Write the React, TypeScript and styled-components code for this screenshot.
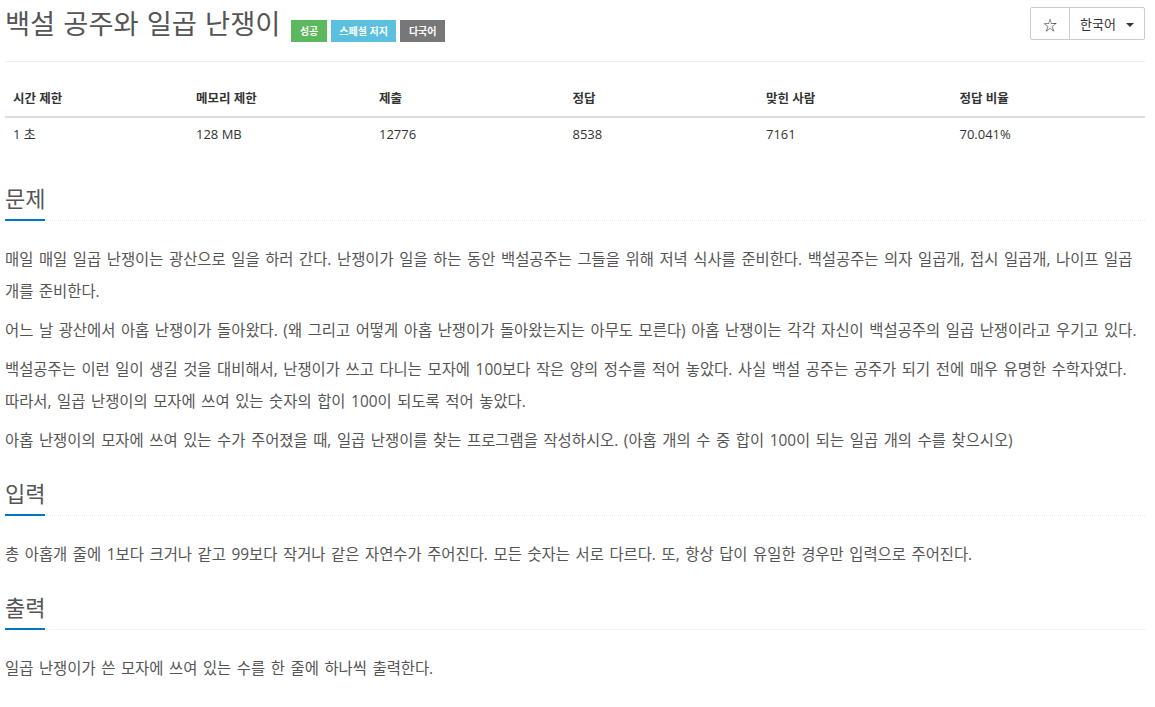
import styled, { createGlobalStyle } from "styled-components";

const GlobalStyle = createGlobalStyle`
  html, body {
    margin: 0;
    padding: 0;
    background: #fff;
    overflow: hidden;
  }
  body {
    font-family: "Open Sans", "Noto Sans CJK KR", sans-serif;
    color: #555;
  }
`;

const Page = styled.div`
  display: flex;
  flex-direction: column;
  padding: 0 10px 0 5px;
`;

const Header = styled.div`
  display: flex;
  justify-content: space-between;
  align-items: flex-start;
  padding-top: 6px;
`;

const TitleRow = styled.div`
  display: flex;
  align-items: flex-end;
  gap: 4px;
`;

const Title = styled.h1`
  margin: 0 7px 0 0;
  font-size: 27.3px;
  line-height: 36px;
  font-weight: 400;
  color: #555;
  word-spacing: 1px;
`;

const Label = styled.span<{ $bg: string }>`
  display: inline-block;
  height: 22px;
  line-height: 22px;
  padding: 0 8.5px;
  font-size: 10px;
  font-weight: 700;
  color: #fff;
  background: ${(p) => p.$bg};
  white-space: nowrap;
`;

const ButtonGroup = styled.div`
  display: flex;
  margin-top: 1px;
  border: 1px solid #ccc;
  border-radius: 2px;
  height: 31px;
`;

const StarButton = styled.div`
  width: 38px;
  display: flex;
  align-items: center;
  justify-content: center;
  border-right: 1px solid #ccc;
  font-size: 14px;
  color: #333;
`;

const LangButton = styled.div`
  width: 74px;
  display: flex;
  align-items: center;
  justify-content: center;
  gap: 10px;
  font-size: 13px;
  color: #333;
`;

const Caret = styled.span`
  width: 0;
  height: 0;
  border-left: 4px solid transparent;
  border-right: 4px solid transparent;
  border-top: 4px solid #333;
  margin-top: 2px;
`;

const Rule = styled.hr`
  margin: 19px 0 0;
  border: 0;
  border-top: 1px solid #eee;
  height: 0;
`;

const Table = styled.table`
  margin-top: 20px;
  width: 100%;
  table-layout: fixed;
  border-collapse: collapse;
`;

const Th = styled.th<{ $w: string }>`
  width: ${(p) => p.$w};
  text-align: left;
  padding: 8px;
  font-size: 12.5px;
  line-height: 18px;
  font-weight: 700;
  color: #333;
  border-bottom: 2px solid #ddd;
`;

const Td = styled.td`
  padding: 8px;
  font-size: 13px;
  line-height: 17px;
  color: #333;
`;

const Section = styled.section<{ $top: number }>`
  margin-top: ${(p) => p.$top}px;
`;

const Headline = styled.div`
  border-bottom: 1px dotted #e4e9f0;
  margin-bottom: 23px;
`;

const SectionTitle = styled.h2`
  display: inline-block;
  margin: 0 0 -1px;
  padding-bottom: 6px;
  font-size: 22px;
  line-height: 30px;
  font-weight: 400;
  color: #555;
  border-bottom: 2px solid #0076c0;
`;

const Text = styled.p`
  margin: 0 0 7px;
  font-size: 15.4px;
  line-height: 32px;
  word-spacing: 1.6px;
  color: #555;
  &:last-child {
    margin-bottom: 0;
  }
`;

const stats = [
  { head: "시간 제한", value: "1 초", w: "16%" },
  { head: "메모리 제한", value: "128 MB", w: "16%" },
  { head: "제출", value: "12776", w: "17%" },
  { head: "정답", value: "8538", w: "17%" },
  { head: "맞힌 사람", value: "7161", w: "17%" },
  { head: "정답 비율", value: "70.041%", w: "17%" },
];

const sections = [
  {
    title: "문제",
    top: 32,
    body: [
      "매일 매일 일곱 난쟁이는 광산으로 일을 하러 간다. 난쟁이가 일을 하는 동안 백설공주는 그들을 위해 저녁 식사를 준비한다. 백설공주는 의자 일곱개, 접시 일곱개, 나이프 일곱개를 준비한다.",
      "어느 날 광산에서 아홉 난쟁이가 돌아왔다. (왜 그리고 어떻게 아홉 난쟁이가 돌아왔는지는 아무도 모른다) 아홉 난쟁이는 각각 자신이 백설공주의 일곱 난쟁이라고 우기고 있다.",
      "백설공주는 이런 일이 생길 것을 대비해서, 난쟁이가 쓰고 다니는 모자에 100보다 작은 양의 정수를 적어 놓았다. 사실 백설 공주는 공주가 되기 전에 매우 유명한 수학자였다. 따라서, 일곱 난쟁이의 모자에 쓰여 있는 숫자의 합이 100이 되도록 적어 놓았다.",
      "아홉 난쟁이의 모자에 쓰여 있는 수가 주어졌을 때, 일곱 난쟁이를 찾는 프로그램을 작성하시오. (아홉 개의 수 중 합이 100이 되는 일곱 개의 수를 찾으시오)",
    ],
  },
  {
    title: "입력",
    top: 21,
    body: [
      "총 아홉개 줄에 1보다 크거나 같고 99보다 작거나 같은 자연수가 주어진다. 모든 숫자는 서로 다르다. 또, 항상 답이 유일한 경우만 입력으로 주어진다.",
    ],
  },
  {
    title: "출력",
    top: 21,
    body: ["일곱 난쟁이가 쓴 모자에 쓰여 있는 수를 한 줄에 하나씩 출력한다."],
  },
];

const App = () => {
  return (
    <>
      <GlobalStyle />
      <Page>
        <Header>
          <TitleRow>
            <Title>백설 공주와 일곱 난쟁이</Title>
            <Label $bg="#5cb85c">성공</Label>
            <Label $bg="#5bc0de">스페셜 저지</Label>
            <Label $bg="#777">다국어</Label>
          </TitleRow>
          <ButtonGroup>
            <StarButton>☆</StarButton>
            <LangButton>
              한국어
              <Caret />
            </LangButton>
          </ButtonGroup>
        </Header>

        <Rule />

        <Table>
          <thead>
            <tr>
              {stats.map((s) => (
                <Th key={s.head} $w={s.w}>
                  {s.head}
                </Th>
              ))}
            </tr>
          </thead>
          <tbody>
            <tr>
              {stats.map((s) => (
                <Td key={s.head}>{s.value}</Td>
              ))}
            </tr>
          </tbody>
        </Table>

        {sections.map((sec) => (
          <Section key={sec.title} $top={sec.top}>
            <Headline>
              <SectionTitle>{sec.title}</SectionTitle>
            </Headline>
            {sec.body.map((t, i) => (
              <Text key={i}>{t}</Text>
            ))}
          </Section>
        ))}
      </Page>
    </>
  );
};

export default App;
